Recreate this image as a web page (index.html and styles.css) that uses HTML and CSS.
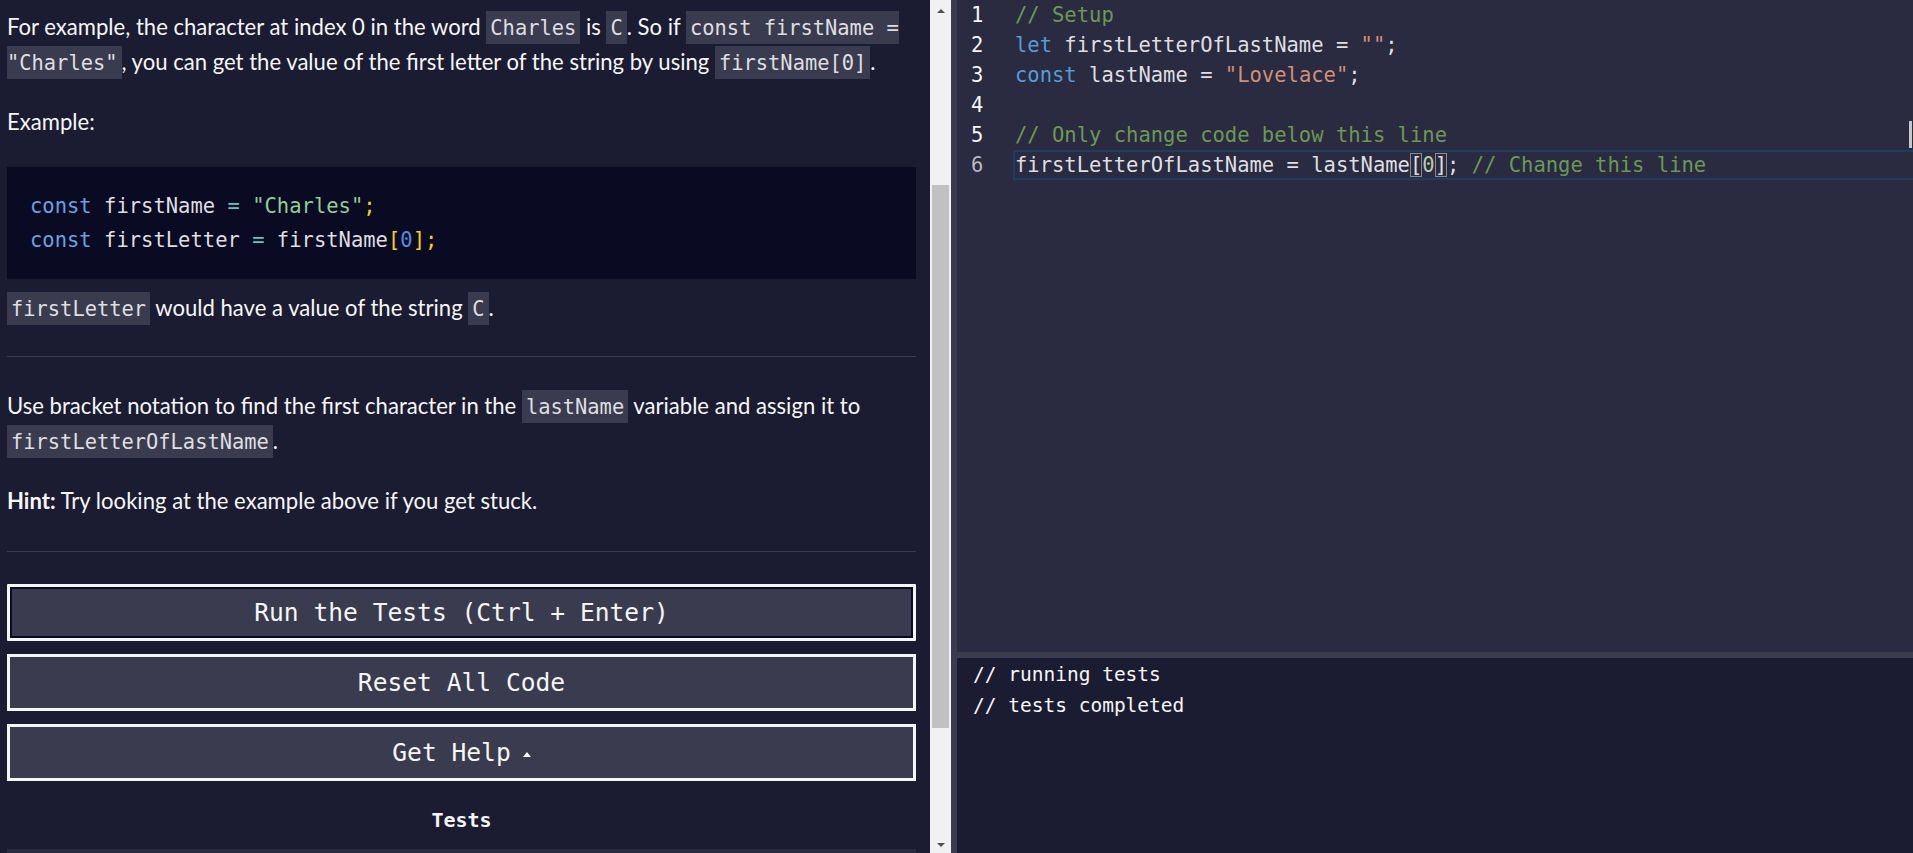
FILE: index.html
```html
<!DOCTYPE html>
<html lang="en">
<head>
<meta charset="utf-8">
<title>Use Bracket Notation to Find the First Character in a String</title>
<link rel="stylesheet" href="styles.css">
</head>
<body>
<div class="app">
  <section class="left">
    <p>For example, the character at index 0 in the word <code>Charles</code> is <code>C</code>. So if <code>const firstName = "Charles"</code>, you can get the value of the first letter of the string by using <code>firstName[0]</code>.</p>
    <p>Example:</p>
    <pre class="example"><span class="p-kw">const</span> firstName <span class="p-op">=</span> <span class="p-str">"Charles"</span><span class="p-pn">;</span>
<span class="p-kw">const</span> firstLetter <span class="p-op">=</span> firstName<span class="p-pn">[</span><span class="p-num">0</span><span class="p-pn">]</span><span class="p-pn">;</span></pre>
    <p><code>firstLetter</code> would have a value of the string <code>C</code>.</p>
    <hr class="rule rule-a">
    <p>Use bracket notation to find the first character in the <code>lastName</code> variable and assign it to <code>firstLetterOfLastName</code>.</p>
    <p><strong>Hint:</strong> Try looking at the example above if you get stuck.</p>
    <hr class="rule rule-b">
    <div class="actions">
      <button class="btn btn-focus">Run the Tests (Ctrl + Enter)</button>
      <button class="btn">Reset All Code</button>
      <button class="btn">Get Help <span class="caret"></span></button>
    </div>
    <h2 class="tests-title">Tests</h2>
    <div class="test-strip"></div>
  </section>

  <div class="scrollbar">
    <div class="sb-arrow"><span class="tri-up"></span></div>
    <div class="sb-gap"></div>
    <div class="sb-thumb"></div>
    <div class="sb-fill"></div>
    <div class="sb-arrow"><span class="tri-down"></span></div>
  </div>

  <div class="vsplit"></div>

  <section class="right">
    <div class="editor">
      <div class="gutter">
        <div class="ln">1</div>
        <div class="ln">2</div>
        <div class="ln">3</div>
        <div class="ln">4</div>
        <div class="ln">5</div>
        <div class="ln ln-dim">6</div>
      </div>
      <div class="code">
        <div class="line"><span class="e-cm">// Setup</span></div>
        <div class="line"><span class="e-kw">let</span> firstLetterOfLastName = <span class="e-str">""</span>;</div>
        <div class="line"><span class="e-kw">const</span> lastName = <span class="e-str">"Lovelace"</span>;</div>
        <div class="line"> </div>
        <div class="line"><span class="e-cm">// Only change code below this line</span></div>
        <div class="line line-current">firstLetterOfLastName = lastName<span class="e-br">[</span><span class="e-num">0</span><span class="e-br">]</span>; <span class="e-cm">// Change this line</span></div>
      </div>
      <div class="ruler-mark"></div>
    </div>
    <div class="hsplit"></div>
    <div class="console">
      <div class="out">// running tests</div>
      <div class="out">// tests completed</div>
    </div>
  </section>
</div>
</body>
</html>
```

FILE: styles.css
```css
* { box-sizing: border-box; }

html, body {
  margin: 0;
  padding: 0;
  height: 100%;
  overflow: hidden;
  background: #1b1b32;
}

.app {
  display: flex;
  height: 853px;
}

/* ---------- left instructions panel ---------- */
.left {
  width: 930px;
  flex: 0 0 930px;
  padding: 9px 14px 0 7px;
  background: #1b1b32;
  color: #f5f6f7;
  font-family: Lato, "Open Sans", sans-serif;
  font-size: 22.1px;
  overflow: hidden;
}

.left p {
  margin: 0 0 25px;
  line-height: 35px;
}

.left strong { font-weight: 700; }

.left code {
  font-family: "DejaVu Sans Mono", monospace;
  font-size: 20.4px;
  line-height: 1;
  background: #3b3b4f;
  color: #dfdfe2;
  padding: 5px 4px 4px;
}

.example {
  margin: 28px 0 11px;
  padding: 22px 23px;
  background: #0a0a23;
  color: #dfdfe2;
  font-family: "DejaVu Sans Mono", monospace;
  font-size: 20.5px;
  line-height: 34px;
  white-space: pre;
}

.p-kw { color: #66a3e0; }
.p-op { color: #61c8c0; }
.p-str { color: #8fcf9a; }
.p-pn { color: #f2d31e; }
.p-num { color: #4f8ddb; }

.rule {
  border: 0;
  height: 1px;
  background: #3b3b4f;
  margin: 0;
}
.rule-a { margin: 31px 0 31px; }
.rule-b { margin: 33px 0 32px; }

.actions {
  display: flex;
  flex-direction: column;
  gap: 13px;
}

.btn {
  height: 57px;
  width: 100%;
  display: flex;
  align-items: center;
  justify-content: center;
  background: #3b3b4f;
  color: #f5f6f7;
  border: 3px solid #f5f6f7;
  font-family: "DejaVu Sans Mono", monospace;
  font-size: 24.6px;
  padding: 0;
}

.btn-focus {
  box-shadow: inset 0 0 0 2px #0a0a23;
  border-radius: 1px;
}

.caret {
  display: inline-block;
  width: 0;
  height: 0;
  margin-left: 12px;
  margin-top: 3px;
  border-left: 4px solid transparent;
  border-right: 4px solid transparent;
  border-bottom: 5px solid #f5f6f7;
}

.tests-title {
  margin: 24px 0 14px;
  text-align: center;
  font-family: "DejaVu Sans Mono", monospace;
  font-size: 20px;
  font-weight: 700;
  line-height: 30px;
  color: #f5f6f7;
}

.test-strip {
  height: 20px;
  background: #2a2a40;
}

/* ---------- scrollbar ---------- */
.scrollbar {
  width: 21px;
  flex: 0 0 21px;
  background: #f1f1f1;
  display: flex;
  flex-direction: column;
}

.sb-arrow {
  height: 17px;
  display: flex;
  align-items: center;
  justify-content: center;
}

.tri-up {
  width: 0; height: 0;
  border-left: 4px solid transparent;
  border-right: 4px solid transparent;
  border-bottom: 4px solid #505050;
  margin-top: 5px;
}

.tri-down {
  width: 0; height: 0;
  border-left: 4px solid transparent;
  border-right: 4px solid transparent;
  border-top: 4px solid #505050;
}

.sb-gap { height: 168px; }

.sb-thumb {
  height: 543px;
  margin: 0 2px 0 2px;
  background: #c1c1c1;
}

.sb-fill { flex: 1; }

.vsplit {
  width: 6px;
  flex: 0 0 6px;
  background: #3b3b4f;
}

/* ---------- right: editor + console ---------- */
.right {
  flex: 1;
  display: flex;
  flex-direction: column;
  min-width: 0;
}

.editor {
  position: relative;
  height: 652px;
  flex: 0 0 652px;
  background: #2a2a40;
  display: flex;
  font-family: "DejaVu Sans Mono", monospace;
  font-size: 20.5px;
  overflow: hidden;
}

.gutter {
  width: 58px;
  flex: 0 0 58px;
  padding-left: 14px;
}

.ln {
  height: 30px;
  line-height: 30px;
  color: #f5f6f7;
}

.ln-dim { color: #b8b8c0; }

.code {
  flex: 1;
  min-width: 0;
}

.line {
  height: 30px;
  line-height: 28px;
  white-space: pre;
  color: #dfdfe2;
  border: 1px solid transparent;
  border-right: 0;
  margin-left: -1px;
}

.line-current {
  border-color: #1f3d5e;
  border-width: 2px 0 2px 2px;
  line-height: 26px;
  margin-left: -2px;
}

.e-cm { color: #6a9955; }
.e-kw { color: #569cd6; }
.e-str { color: #ce9178; }
.e-num { color: #b5cea8; }
.e-br {
  outline: 1px solid #8a8a8a;
  outline-offset: -1px;
}

.ruler-mark {
  position: absolute;
  right: 1px;
  top: 121px;
  width: 3px;
  height: 27px;
  background: #c8c8c8;
}

.hsplit {
  height: 6px;
  flex: 0 0 6px;
  background: #3b3b4f;
}

.console {
  flex: 1;
  background: #1b1b32;
  color: #f5f6f7;
  font-family: "DejaVu Sans Mono", monospace;
  font-size: 19.5px;
  padding: 1px 16px;
}

.out {
  line-height: 31px;
  white-space: pre;
}
```
